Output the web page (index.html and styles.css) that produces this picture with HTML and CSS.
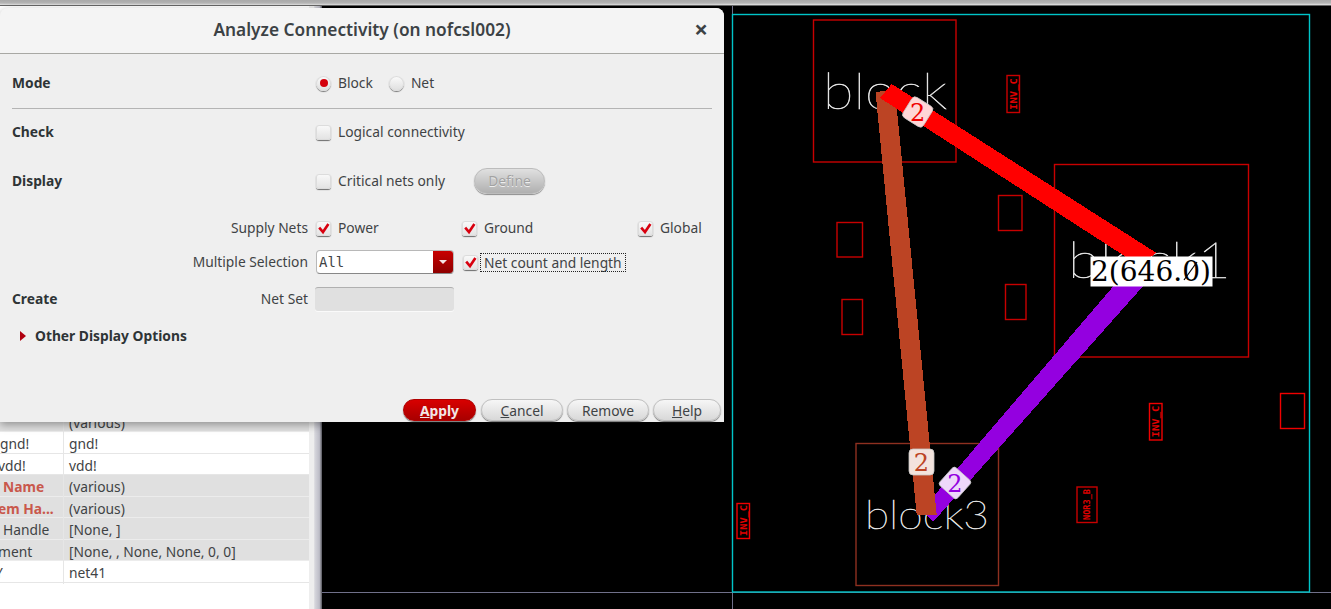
FILE: index.html
```html
<!DOCTYPE html>
<html lang="en">
<head>
  <meta charset="UTF-8" />
  <title>Analyze Connectivity</title>
  <link rel="stylesheet" href="styles.css">
</head>
<body>
  <svg class="defs" width="0" height="0">
    <symbol id="tick" viewBox="0 0 15 15">
      <path d="M3.2 6.6 L7 11 L12.4 3" fill="none" stroke="#d8000f" stroke-width="2.6" />
    </symbol>
  </svg>

  <div class="topbar"></div>

  <div class="workspace">
    <!-- property table, mostly hidden by the dialog -->
    <aside class="props">
      <div class="prop grey"><span class="prop-name"></span><span class="prop-value">(various)</span></div>
      <div class="prop"><span class="prop-name">gnd!</span><span class="prop-value">gnd!</span></div>
      <div class="prop"><span class="prop-name out">vdd!</span><span class="prop-value">vdd!</span></div>
      <div class="prop grey"><span class="prop-name in red">Name</span><span class="prop-value">(various)</span></div>
      <div class="prop grey"><span class="prop-name out red">em Ha...</span><span class="prop-value">(various)</span></div>
      <div class="prop grey"><span class="prop-name in">Handle</span><span class="prop-value">[None, ]</span></div>
      <div class="prop grey"><span class="prop-name out">ment</span><span class="prop-value">[None, , None, None, 0, 0]</span></div>
      <div class="prop"><span class="prop-name far">Y</span><span class="prop-value">net41</span></div>
    </aside>

    <div class="scroller"></div>

    <svg class="canvas" viewBox="322 6 1009 603" width="1009" height="603">
      <path class="grid-line" d="M322 592.5 H1331 M732.5 6 V609" />
      <rect class="boundary" x="732.5" y="14.5" width="577" height="577.5" />

      <rect class="inst" x="813.5" y="20" width="142.5" height="142" />
      <rect class="inst" x="1054.5" y="164.5" width="194" height="192.5" />
      <rect class="inst brown" x="856" y="443.5" width="142.5" height="142" />

      <rect class="inst" x="837" y="222.5" width="25.5" height="34.5" />
      <rect class="inst" x="842" y="299.5" width="20.5" height="35" />
      <rect class="inst" x="998.5" y="195.5" width="23.5" height="35" />
      <rect class="inst" x="1005.5" y="284.5" width="20.5" height="35" />
      <rect class="inst bright" x="1280.5" y="393.5" width="24" height="35" />

      <rect class="inst" x="1007" y="75.5" width="12.5" height="37" />
      <rect class="inst bright" x="1149.5" y="403.5" width="12.5" height="36.5" />
      <rect class="inst bright" x="737" y="503.5" width="12.5" height="35" />
      <rect class="inst" x="1077" y="487" width="20" height="35.5" />

      <text class="cell-tag" transform="translate(1016.5 110) rotate(-90)" textLength="32" lengthAdjust="spacingAndGlyphs">INV_C</text>
      <text class="cell-tag" transform="translate(1159 437.5) rotate(-90)" textLength="32" lengthAdjust="spacingAndGlyphs">INV_C</text>
      <text class="cell-tag" transform="translate(746.5 536) rotate(-90)" textLength="31" lengthAdjust="spacingAndGlyphs">INV_C</text>
      <text class="cell-tag" transform="translate(1090 520) rotate(-90)" textLength="31" lengthAdjust="spacingAndGlyphs">NOR3_B</text>

      <text class="block-name" x="823" y="109" textLength="124" lengthAdjust="spacingAndGlyphs">block</text>
      <text class="block-name" x="1068" y="278" textLength="163" lengthAdjust="spacingAndGlyphs">block1</text>
      <text class="block-name small" x="865" y="529" textLength="124" lengthAdjust="spacingAndGlyphs">block3</text>

      <polygon class="wire purple" points="1123,275 1153,275 933,522 925,514 933,497" />
      <polygon class="wire rust" points="875.5,92 895,90 936.7,515 916.7,515" />
      <polygon class="wire scarlet" points="880,98 891.7,84 1156,252.7 1140,266" />

      <g transform="translate(917.7 112) rotate(32)">
        <rect class="badge scarlet-bg" x="-12" y="-12" width="24" height="24" rx="4" />
        <text class="badge-num scarlet-num" y="8.5" transform="rotate(-32)">2</text>
      </g>
      <g transform="translate(921.5 462)">
        <rect class="badge rust-bg" x="-12.5" y="-13" width="25" height="26" rx="4" />
        <text class="badge-num rust-num" y="8.5">2</text>
      </g>
      <g transform="translate(955 483) rotate(-48)">
        <rect class="badge purple-bg" x="-12" y="-12" width="24" height="24" rx="3" />
        <text class="badge-num purple-num" y="8.5" transform="rotate(48)">2</text>
      </g>

      <rect class="net-label-bg" x="1090.5" y="256.5" width="122" height="30" />
      <text class="net-label" x="1091" y="281" textLength="120" lengthAdjust="spacingAndGlyphs">2(646.0)</text>
      <path class="zero-slash" d="M1184 280 L1197 262" />
    </svg>
  </div>

  <div class="dialog">
    <header class="dialog-head">
      <h1>Analyze Connectivity (on nofcsl002)</h1>
      <span class="close">×</span>
    </header>

    <div class="form">
      <div class="row">
        <div class="row-label"><b>Mode</b></div>
        <div class="row-body">
          <span class="radio on"></span><span class="opt">Block</span>
          <span class="radio next"></span><span class="opt">Net</span>
        </div>
      </div>

      <div class="rule"></div>

      <div class="row after-rule">
        <div class="row-label"><b>Check</b></div>
        <div class="row-body">
          <span class="check"></span><span class="opt">Logical connectivity</span>
        </div>
      </div>

      <div class="row wide">
        <div class="row-label"><b>Display</b></div>
        <div class="row-body">
          <span class="check"></span><span class="opt">Critical nets only</span>
          <button class="define">Define</button>
        </div>
      </div>

      <div class="row wide">
        <div class="row-label"><b></b><span>Supply Nets</span></div>
        <div class="row-body supply">
          <div class="pair"><span class="check"><svg><use href="#tick" /></svg></span><span class="opt">Power</span></div>
          <div class="pair"><span class="check"><svg><use href="#tick" /></svg></span><span class="opt">Ground</span></div>
          <div class="pair"><span class="check"><svg><use href="#tick" /></svg></span><span class="opt">Global</span></div>
        </div>
      </div>

      <div class="row tight">
        <div class="row-label"><b></b><span>Multiple Selection</span></div>
        <div class="row-body">
          <div class="combo"><span class="combo-text">All</span><span class="combo-btn"></span></div>
          <span class="check"><svg><use href="#tick" /></svg></span>
          <span class="opt focused">Net count and length</span>
        </div>
      </div>

      <div class="row mid">
        <div class="row-label"><b>Create</b><span>Net Set</span></div>
        <div class="row-body"><div class="field"></div></div>
      </div>

      <div class="row mid more">
        <span class="arrow"></span><b>Other Display Options</b>
      </div>
    </div>

    <footer class="dialog-foot">
      <button class="btn apply"><u>A</u>pply</button>
      <button class="btn cancel"><u>C</u>ancel</button>
      <button class="btn cancel">Remove</button>
      <button class="btn help"><u>H</u>elp</button>
    </footer>
  </div>
</body>
</html>
```

FILE: styles.css
```css
html, body {
  margin: 0;
  padding: 0;
  height: 100%;
  overflow: hidden;
  background: #000;
  font-family: "Noto Sans", "Open Sans", sans-serif;
  font-size: 13.8px;
  color: #3f4345;
}

.defs {
  position: absolute;
}

.topbar {
  height: 5px;
  background: linear-gradient(#a9a9a9 0, #b4b4b4 60%, #e4e4e4 100%);
  border-bottom: 1px solid #666;
}

.workspace {
  display: flex;
  height: 603px;
}

/* left table */
.props {
  width: 309px;
  height: 603px;
  box-sizing: border-box;
  padding-top: 404.5px;
  background: #fff;
  flex: none;
}

.prop {
  display: grid;
  grid-template-columns: 64px 1fr;
  height: 21.5px;
  line-height: 23px;
  box-sizing: border-box;
  border-bottom: 1px solid #e6e6e6;
  white-space: nowrap;
}

.prop.grey {
  background: #e0e0e0;
  border-bottom-color: #ececec;
}

.prop-name {
  border-right: 1px solid #e6e6e6;
  overflow: hidden;
}

.prop-name.in {
  padding-left: 3px;
}

.prop-name.out {
  text-indent: -2px;
}

.prop-name.far {
  text-indent: -5px;
}

.prop-name.red {
  color: #c9584c;
  font-weight: 700;
}

.prop-value {
  padding-left: 5px;
}

.scroller {
  width: 13px;
  flex: none;
  background: linear-gradient(90deg, #eeeeee 0, #eeeeee 35%, #d6d6dc 45%, #bcbcc6 80%, #55555c 100%);
}

/* layout canvas */
.canvas {
  display: block;
  flex: none;
}

.grid-line {
  fill: none;
  stroke: #70708a;
  stroke-width: 1;
}

.boundary {
  fill: none;
  stroke: #00c4c8;
  stroke-width: 1.4;
}

.inst {
  fill: none;
  stroke: #c80000;
  stroke-width: 1.4;
}

.inst.bright {
  stroke: #f00000;
}

.inst.brown {
  stroke: #8e3020;
}

.cell-tag {
  font-family: "DejaVu Sans Mono", monospace;
  font-size: 9px;
  font-weight: 700;
  fill: #e00000;
}

.block-name {
  font-family: Lato, sans-serif;
  font-weight: 100;
  font-size: 50px;
  fill: #f0f0f0;
  stroke: #e8e8e8;
  stroke-width: 0.5;
}

.block-name.small {
  font-size: 40px;
}

.wire {
  shape-rendering: crispEdges;
}

.purple { fill: #9400e0; }
.rust { fill: #bc4424; }
.scarlet { fill: #ff0000; }

.scarlet-bg { fill: #ffd6d6; }
.rust-bg { fill: #f3e3dd; }
.purple-bg { fill: #eed8fa; }

.badge {
  stroke: #c8c8c8;
  stroke-width: 0.8;
}

.badge-num {
  font-family: "DejaVu Serif", serif;
  font-size: 24px;
  text-anchor: middle;
}

.scarlet-num { fill: #f00000; }
.rust-num { fill: #bc4424; }
.purple-num { fill: #9400e0; }

.net-label-bg {
  fill: #fff;
}

.net-label {
  font-family: "DejaVu Serif", serif;
  font-size: 27px;
  fill: #000;
}

.zero-slash {
  fill: none;
  stroke: #000;
  stroke-width: 1.2;
}

/* dialog window */
.dialog {
  position: absolute;
  left: 0;
  top: 8px;
  width: 724px;
  height: 414px;
  display: flex;
  flex-direction: column;
  background: #efefef;
  border-radius: 8px 8px 0 0;
  box-shadow: 0 3px 9px rgba(0, 0, 0, 0.35);
}

.dialog-head {
  display: flex;
  align-items: center;
  justify-content: center;
  position: relative;
  height: 43px;
  padding-bottom: 2px;
  background: #f4f4f4;
  border-bottom: 1px solid #a8a8a4;
  border-radius: 8px 8px 0 0;
}

.dialog-head h1 {
  margin: 0;
  font-size: 17.3px;
  font-weight: 600;
  color: #3c4245;
}

.close {
  position: absolute;
  right: 16px;
  top: 6px;
  font-size: 24px;
  line-height: 30px;
  font-weight: 700;
  color: #3c4245;
}

.form {
  padding: 17px 12px 0;
  line-height: 22px;
}

.row {
  display: grid;
  grid-template-columns: 296px 1fr;
  column-gap: 8px;
  height: 24px;
  align-items: center;
}

.row.wide { margin-top: 24px; }
.row.tight { margin-top: 10px; }
.row.mid { margin-top: 13px; }
.row.after-rule { margin-top: 11px; }

.row b {
  font-weight: 700;
  color: #2e3436;
}

.row-label {
  display: flex;
  justify-content: space-between;
}

.row-body {
  display: flex;
  align-items: center;
}

.supply {
  display: grid;
  grid-template-columns: 146px 176px auto;
}

.pair {
  display: flex;
  align-items: center;
}

.rule {
  height: 1px;
  margin-top: 13px;
  background: #b4b4b4;
}

.opt {
  margin-left: 7px;
  white-space: nowrap;
}

.check {
  flex: none;
  display: block;
  width: 15px;
  height: 15px;
  border-radius: 3px;
  background: linear-gradient(#fafafa, #e2e2e2);
  box-shadow: inset 0 0 0 1px #dcdcdc, 0 1px 1px #6c6c6c;
}

.check svg {
  display: block;
  width: 15px;
  height: 15px;
}

.radio {
  flex: none;
  width: 15px;
  height: 15px;
  border-radius: 50%;
  background: linear-gradient(#fbfbfb, #dedede);
  box-shadow: inset 0 0 0 1px #dcdcdc, 0 1px 1px #777;
  display: flex;
  align-items: center;
  justify-content: center;
}

.radio.on::after {
  content: "";
  width: 8px;
  height: 8px;
  border-radius: 50%;
  background: #d4000c;
}

.radio.next {
  margin-left: 16px;
}

.define {
  margin-left: 29px;
  width: 71px;
  height: 26px;
  padding: 0;
  border: 1px solid #bcbcbc;
  border-radius: 13px;
  background: linear-gradient(#e0e0e0, #b0b0b0);
  box-shadow: 0 1px 1px #8c8c8c;
  font: inherit;
  color: #a2a2a2;
  text-shadow: 0 1px 0 #eee;
}

.combo {
  display: flex;
  width: 138px;
  height: 24px;
  margin-right: 9px;
  box-sizing: border-box;
  background: #fff;
  border: 1px solid #b8b8b8;
  border-bottom-color: #888;
  border-radius: 4px;
  overflow: hidden;
}

.combo-text {
  flex: 1;
  padding-left: 2px;
  font-family: "DejaVu Sans Mono", monospace;
  font-size: 14px;
  line-height: 22px;
}

.combo-btn {
  position: relative;
  width: 20px;
  background: linear-gradient(#c80000, #8e0000);
}

.combo-btn::after {
  content: "";
  position: absolute;
  left: 6px;
  top: 9px;
  border-left: 4px solid transparent;
  border-right: 4px solid transparent;
  border-top: 4px solid #f4e4e4;
}

.focused {
  margin-left: 3px;
  padding: 0 3px;
  outline: 1px dotted #222;
  line-height: 17px;
}

.field {
  width: 139px;
  height: 24px;
  margin-left: -1px;
  box-sizing: border-box;
  background: #e0e0e0;
  border-top: 1px solid #b0b0b0;
  border-radius: 3px;
  box-shadow: 0 1px 0 #fafafa;
}

.more {
  display: flex;
  column-gap: 0;
  padding-left: 8px;
}

.arrow {
  width: 0;
  height: 0;
  margin-right: 9px;
  border-top: 5px solid transparent;
  border-bottom: 5px solid transparent;
  border-left: 6px solid #b00010;
}

.dialog-foot {
  display: flex;
  justify-content: flex-end;
  gap: 4px;
  margin-top: auto;
  padding: 0 3px 1px 0;
}

.btn {
  width: 82px;
  height: 22px;
  padding: 0;
  border: 1px solid #c0c0c0;
  border-radius: 11px;
  background: linear-gradient(#f6f6f6, #d8d8d8);
  box-shadow: 0 1px 1px #777;
  font: inherit;
  color: #3f4345;
}

.btn.apply {
  width: 73px;
  margin-right: 1px;
  border-color: #b00000;
  background: linear-gradient(#d80000, #a80000);
  color: #f2e6e6;
  font-weight: 700;
}

.btn.help {
  width: 68px;
}
```
